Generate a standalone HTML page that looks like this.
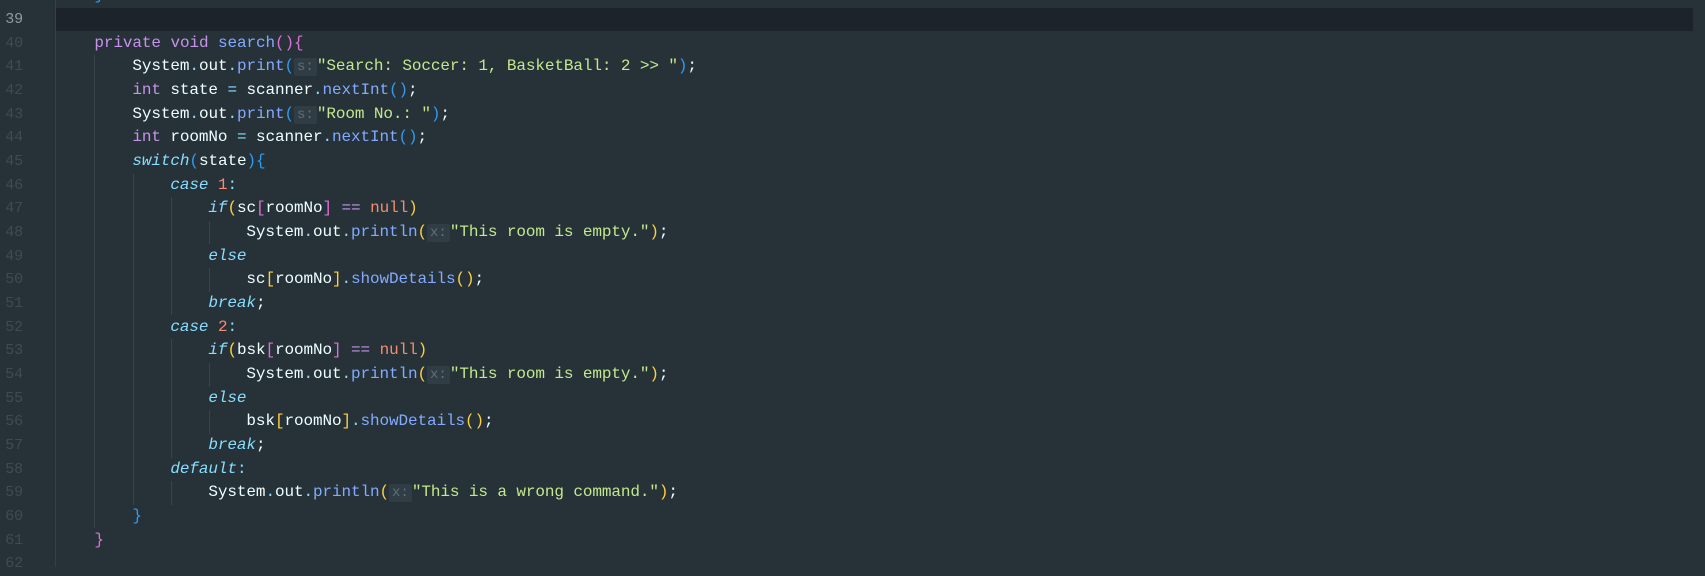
<!DOCTYPE html>
<html><head><meta charset="utf-8"><style>
html,body{margin:0;padding:0}
body{width:1705px;height:567px;background:#263238;overflow:hidden;position:relative;font-family:"Liberation Mono",monospace;font-size:16px;letter-spacing:-0.1px;color:#eeffff}
.hl{position:absolute;left:56px;top:8px;width:1637px;height:23px;background:#1c232b}
.div{position:absolute;left:55px;top:0;width:1px;height:567px;background:#334047}
.ln{position:absolute;left:0;width:23px;text-align:right;color:#3d4c54;font-size:15px;height:23.67px;line-height:23.67px}
.ln.cur{color:#8d9ca3}
.l{position:absolute;left:56.4px;height:23.67px;line-height:23.67px;white-space:pre}
.g{position:absolute;width:1px;background:#36444b}
.k{color:#c792ea}.f{color:#82aaff}.s{color:#c3e88d}.n{color:#f78c6c}.o{color:#89ddff}.c{color:#89ddff;font-style:italic}
.b1{color:#da70d6}.b2{color:#2f9cf0}.b3{color:#ffcf40}
.h{display:inline-block;background:#313d44;color:#5f6f76;font-size:14px;letter-spacing:0;padding:0 3px;line-height:18px;border-radius:2px}
</style></head><body>
<div class="hl"></div>
<div class="div"></div>
<div class="ln" style="top:-15.9px">38</div>
<div class="ln cur" style="top:7.8px">39</div>
<div class="ln" style="top:31.5px">40</div>
<div class="ln" style="top:55.1px">41</div>
<div class="ln" style="top:78.8px">42</div>
<div class="ln" style="top:102.5px">43</div>
<div class="ln" style="top:126.2px">44</div>
<div class="ln" style="top:149.8px">45</div>
<div class="ln" style="top:173.5px">46</div>
<div class="ln" style="top:197.2px">47</div>
<div class="ln" style="top:220.8px">48</div>
<div class="ln" style="top:244.5px">49</div>
<div class="ln" style="top:268.2px">50</div>
<div class="ln" style="top:291.9px">51</div>
<div class="ln" style="top:315.5px">52</div>
<div class="ln" style="top:339.2px">53</div>
<div class="ln" style="top:362.9px">54</div>
<div class="ln" style="top:386.5px">55</div>
<div class="ln" style="top:410.2px">56</div>
<div class="ln" style="top:433.9px">57</div>
<div class="ln" style="top:457.6px">58</div>
<div class="ln" style="top:481.2px">59</div>
<div class="ln" style="top:504.9px">60</div>
<div class="ln" style="top:528.6px">61</div>
<div class="ln" style="top:552.2px">62</div>

<div class="g" style="left:94px;top:55.1px;height:473.4px"></div>
<div class="g" style="left:133px;top:173.5px;height:331.4px"></div>
<div class="g" style="left:171px;top:197.2px;height:118.3px"></div>
<div class="g" style="left:171px;top:339.2px;height:118.4px"></div>
<div class="g" style="left:171px;top:481.2px;height:23.7px"></div>
<div class="g" style="left:209px;top:220.8px;height:23.7px"></div>
<div class="g" style="left:209px;top:268.2px;height:23.7px"></div>
<div class="g" style="left:209px;top:362.9px;height:23.7px"></div>
<div class="g" style="left:209px;top:410.2px;height:23.7px"></div>

<div class="l" style="top:-15.9px">    <span class="b2">}</span></div>
<div class="l" style="top:31.5px">    <span class="k">private</span> <span class="k">void</span> <span class="f">search</span><span class="b1">(){</span></div>
<div class="l" style="top:55.1px">        System<span class="o">.</span>out<span class="o">.</span><span class="f">print</span><span class="b2">(</span><span class="h">s:</span><span class="s">"Search: Soccer: 1, BasketBall: 2 &gt;&gt; "</span><span class="b2">)</span>;</div>
<div class="l" style="top:78.8px">        <span class="k">int</span> state <span class="o">=</span> scanner<span class="o">.</span><span class="f">nextInt</span><span class="b2">()</span>;</div>
<div class="l" style="top:102.5px">        System<span class="o">.</span>out<span class="o">.</span><span class="f">print</span><span class="b2">(</span><span class="h">s:</span><span class="s">"Room No.: "</span><span class="b2">)</span>;</div>
<div class="l" style="top:126.2px">        <span class="k">int</span> roomNo <span class="o">=</span> scanner<span class="o">.</span><span class="f">nextInt</span><span class="b2">()</span>;</div>
<div class="l" style="top:149.8px">        <span class="c">switch</span><span class="b2">(</span>state<span class="b2">){</span></div>
<div class="l" style="top:173.5px">            <span class="c">case</span> <span class="n">1</span><span class="o">:</span></div>
<div class="l" style="top:197.2px">                <span class="c">if</span><span class="b3">(</span>sc<span class="b1">[</span>roomNo<span class="b1">]</span> <span class="k">==</span> <span class="n">null</span><span class="b3">)</span></div>
<div class="l" style="top:220.8px">                    System<span class="o">.</span>out<span class="o">.</span><span class="f">println</span><span class="b3">(</span><span class="h">x:</span><span class="s">"This room is empty."</span><span class="b3">)</span>;</div>
<div class="l" style="top:244.5px">                <span class="c">else</span></div>
<div class="l" style="top:268.2px">                    sc<span class="b3">[</span>roomNo<span class="b3">]</span><span class="o">.</span><span class="f">showDetails</span><span class="b3">()</span>;</div>
<div class="l" style="top:291.9px">                <span class="c">break</span>;</div>
<div class="l" style="top:315.5px">            <span class="c">case</span> <span class="n">2</span><span class="o">:</span></div>
<div class="l" style="top:339.2px">                <span class="c">if</span><span class="b3">(</span>bsk<span class="b1">[</span>roomNo<span class="b1">]</span> <span class="k">==</span> <span class="n">null</span><span class="b3">)</span></div>
<div class="l" style="top:362.9px">                    System<span class="o">.</span>out<span class="o">.</span><span class="f">println</span><span class="b3">(</span><span class="h">x:</span><span class="s">"This room is empty."</span><span class="b3">)</span>;</div>
<div class="l" style="top:386.5px">                <span class="c">else</span></div>
<div class="l" style="top:410.2px">                    bsk<span class="b3">[</span>roomNo<span class="b3">]</span><span class="o">.</span><span class="f">showDetails</span><span class="b3">()</span>;</div>
<div class="l" style="top:433.9px">                <span class="c">break</span>;</div>
<div class="l" style="top:457.6px">            <span class="c">default</span><span class="o">:</span></div>
<div class="l" style="top:481.2px">                System<span class="o">.</span>out<span class="o">.</span><span class="f">println</span><span class="b3">(</span><span class="h">x:</span><span class="s">"This is a wrong command."</span><span class="b3">)</span>;</div>
<div class="l" style="top:504.9px">        <span class="b2">}</span></div>
<div class="l" style="top:528.6px">    <span class="b1">}</span></div>
</body></html>
